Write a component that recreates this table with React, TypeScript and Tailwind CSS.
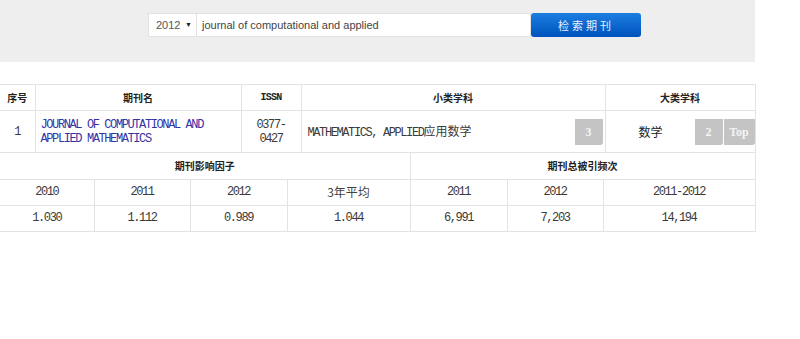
import React from "react";

const monoBase = "font-['Liberation_Mono','Noto_Sans_CJK_SC',monospace] text-[12px] tracking-[-1.4px]";
const mono = `${monoBase} text-[#3a3a3a]`;
const headFont = "text-[10px] font-bold text-[#222]";
const head = `font-['Noto_Sans_CJK_SC',sans-serif] ${headFont}`;
const cjk = "font-['Noto_Sans_CJK_SC',sans-serif] text-[12px] tracking-normal";

const Badge: React.FC<{ children: React.ReactNode; w?: string }> = ({ children, w = "w-[28px]" }) => (
    <span className={`${w} h-[26px] flex items-center justify-center bg-[#c4c4c4] text-[#f4f4f4] font-['Liberation_Serif',serif] text-[12px] font-bold tracking-normal rounded-br-[3px]`}>
        {children}
    </span>
);

const App: React.FC = () => {
    const td = "border border-[#e3e3e3] text-center";

    return (
        <div className="w-[800px] h-[339px] bg-white overflow-hidden">
            <div className="w-[755px] h-[62px] bg-[#eeeeee] pt-[13px] pl-[148px]">
                <div className="flex h-[24px]">
                    <div className="w-[49px] flex items-center justify-between pl-[7px] pr-[4px] bg-white border border-[#e2e2e2] font-['Liberation_Sans',sans-serif] text-[11px] text-[#555]">
                        <span>2012</span>
                        <span className="text-[7px] text-[#222]">▼</span>
                    </div>
                    <div className="w-[334px] flex items-center px-[5px] bg-white border border-l-0 border-[#e2e2e2] font-['Liberation_Sans',sans-serif] text-[11px] text-[#444]">
                        journal of computational and applied
                    </div>
                    <button className="w-[110px] bg-gradient-to-b from-[#1d7ee0] to-[#0052bd] rounded-[3px] text-[#e8f0ff] font-['Noto_Sans_CJK_SC',sans-serif] text-[11px] tracking-[3px]">
                        检索期刊
                    </button>
                </div>
            </div>

            <table className="mt-[22px] w-[755px] table-fixed border-collapse">
                <colgroup>
                    <col className="w-[35px]" />
                    <col className="w-[206px]" />
                    <col className="w-[60px]" />
                    <col className="w-[304px]" />
                    <col className="w-[150px]" />
                </colgroup>
                <tbody>
                    <tr className="h-[26px]">
                        <td className={`${td} border-l-0 ${head}`}>序号</td>
                        <td className={`${td} ${head}`}>期刊名</td>
                        <td className={`${td} font-['Liberation_Mono',monospace] tracking-[-0.8px] ${headFont}`}>ISSN</td>
                        <td className={`${td} ${head}`}>小类学科</td>
                        <td className={`${td} ${head}`}>大类学科</td>
                    </tr>
                    <tr className="h-[42px]">
                        <td className={`${td} border-l-0 ${mono}`}>1</td>
                        <td className={`${td} text-left pl-[5px] leading-[14px] ${monoBase} text-[#3333a6]`}>
                            JOURNAL OF COMPUTATIONAL AND<br />APPLIED MATHEMATICS
                        </td>
                        <td className={`${td} leading-[14px] ${mono}`}>0377-<br />0427</td>
                        <td className={`${td} ${mono} p-0`}>
                            <div className="flex items-center justify-between pl-[6px] pr-[2px]">
                                <span>MATHEMATICS, APPLIED<span className={cjk}>应用数学</span></span>
                                <Badge>3</Badge>
                            </div>
                        </td>
                        <td className={`${td} p-0`}>
                            <div className="flex items-center pl-[33px]">
                                <span className={`${cjk} text-[#222] flex-1 text-left`}>数学</span>
                                <Badge>2</Badge>
                                <span className="w-[1px]" />
                                <Badge w="w-[31px]">Top</Badge>
                            </div>
                        </td>
                    </tr>
                </tbody>
            </table>

            <table className="w-[755px] table-fixed border-collapse">
                <colgroup>
                    <col className="w-[94px]" />
                    <col className="w-[96px]" />
                    <col className="w-[97px]" />
                    <col className="w-[123px]" />
                    <col className="w-[97px]" />
                    <col className="w-[96px]" />
                    <col className="w-[152px]" />
                </colgroup>
                <tbody>
                    <tr className="h-[26px]">
                        <td colSpan={4} className={`${td} border-l-0 border-t-0 ${head}`}>期刊影响因子</td>
                        <td colSpan={3} className={`${td} border-t-0 ${head}`}>期刊总被引频次</td>
                    </tr>
                    <tr className="h-[26px]">
                        <td className={`${td} border-l-0 ${mono}`}>2010</td>
                        <td className={`${td} ${mono}`}>2011</td>
                        <td className={`${td} ${mono}`}>2012</td>
                        <td className={`${td} ${cjk} text-[#444]`}>3年平均</td>
                        <td className={`${td} ${mono}`}>2011</td>
                        <td className={`${td} ${mono}`}>2012</td>
                        <td className={`${td} ${mono}`}>2011-2012</td>
                    </tr>
                    <tr className="h-[26px]">
                        <td className={`${td} border-l-0 ${mono}`}>1.030</td>
                        <td className={`${td} ${mono}`}>1.112</td>
                        <td className={`${td} ${mono}`}>0.989</td>
                        <td className={`${td} ${mono}`}>1.044</td>
                        <td className={`${td} ${mono}`}>6,991</td>
                        <td className={`${td} ${mono}`}>7,203</td>
                        <td className={`${td} ${mono}`}>14,194</td>
                    </tr>
                </tbody>
            </table>
        </div>
    );
};

export default App;
